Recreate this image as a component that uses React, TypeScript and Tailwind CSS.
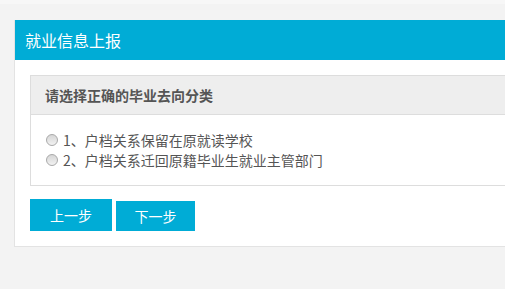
import React from "react";

function Radio() {
  return (
    <span className="inline-block w-[12px] h-[12px] rounded-full border border-[#a9a9a9] bg-gradient-to-b from-[#d6d6d6] to-[#f2f2f2] mr-[5px] shrink-0" />
  );
}

export default function App() {
  const font = { fontFamily: '"Noto Sans CJK SC", "Noto Sans", sans-serif' };
  return (
    <div className="w-[505px] h-[289px] overflow-hidden bg-[#f3f3f3]" style={font}>
      <div className="h-[4px] bg-[#f7f7f7]" />
      <div className="pt-[16px] pl-[14px]">
        <div className="w-[620px] border border-t-0 border-[#e3e3e3] bg-white">
          <div className="h-[40px] bg-[#00acd6] flex items-center pl-[10px] text-[16px] text-white">
            就业信息上报
          </div>
          <div className="px-[15px] pt-[15px] pb-[15px]">
            <div className="w-[590px] border border-[#dddddd]">
              <div className="h-[39px] bg-[#eeeeee] border-b border-[#dddddd] flex items-center pl-[14px] text-[14px] font-bold text-[#555555]">
                请选择正确的毕业去向分类
              </div>
              <div className="pt-[15px] pb-[15px] pl-[15px] text-[14px] text-[#555555]">
                <div className="h-[20px] flex items-center">
                  <Radio />
                  <span>1、户档关系保留在原就读学校</span>
                </div>
                <div className="h-[20px] flex items-center">
                  <Radio />
                  <span>2、户档关系迁回原籍毕业生就业主管部门</span>
                </div>
              </div>
            </div>
            <div className="mt-[13px] flex items-end gap-[4px]">
              <button className="w-[82px] h-[32px] bg-[#00acd6] text-white text-[14px] flex items-center justify-center">
                上一步
              </button>
              <button className="w-[79px] h-[30px] bg-[#00acd6] text-white text-[14px] flex items-center justify-center">
                下一步
              </button>
            </div>
          </div>
        </div>
      </div>
    </div>
  );
}
